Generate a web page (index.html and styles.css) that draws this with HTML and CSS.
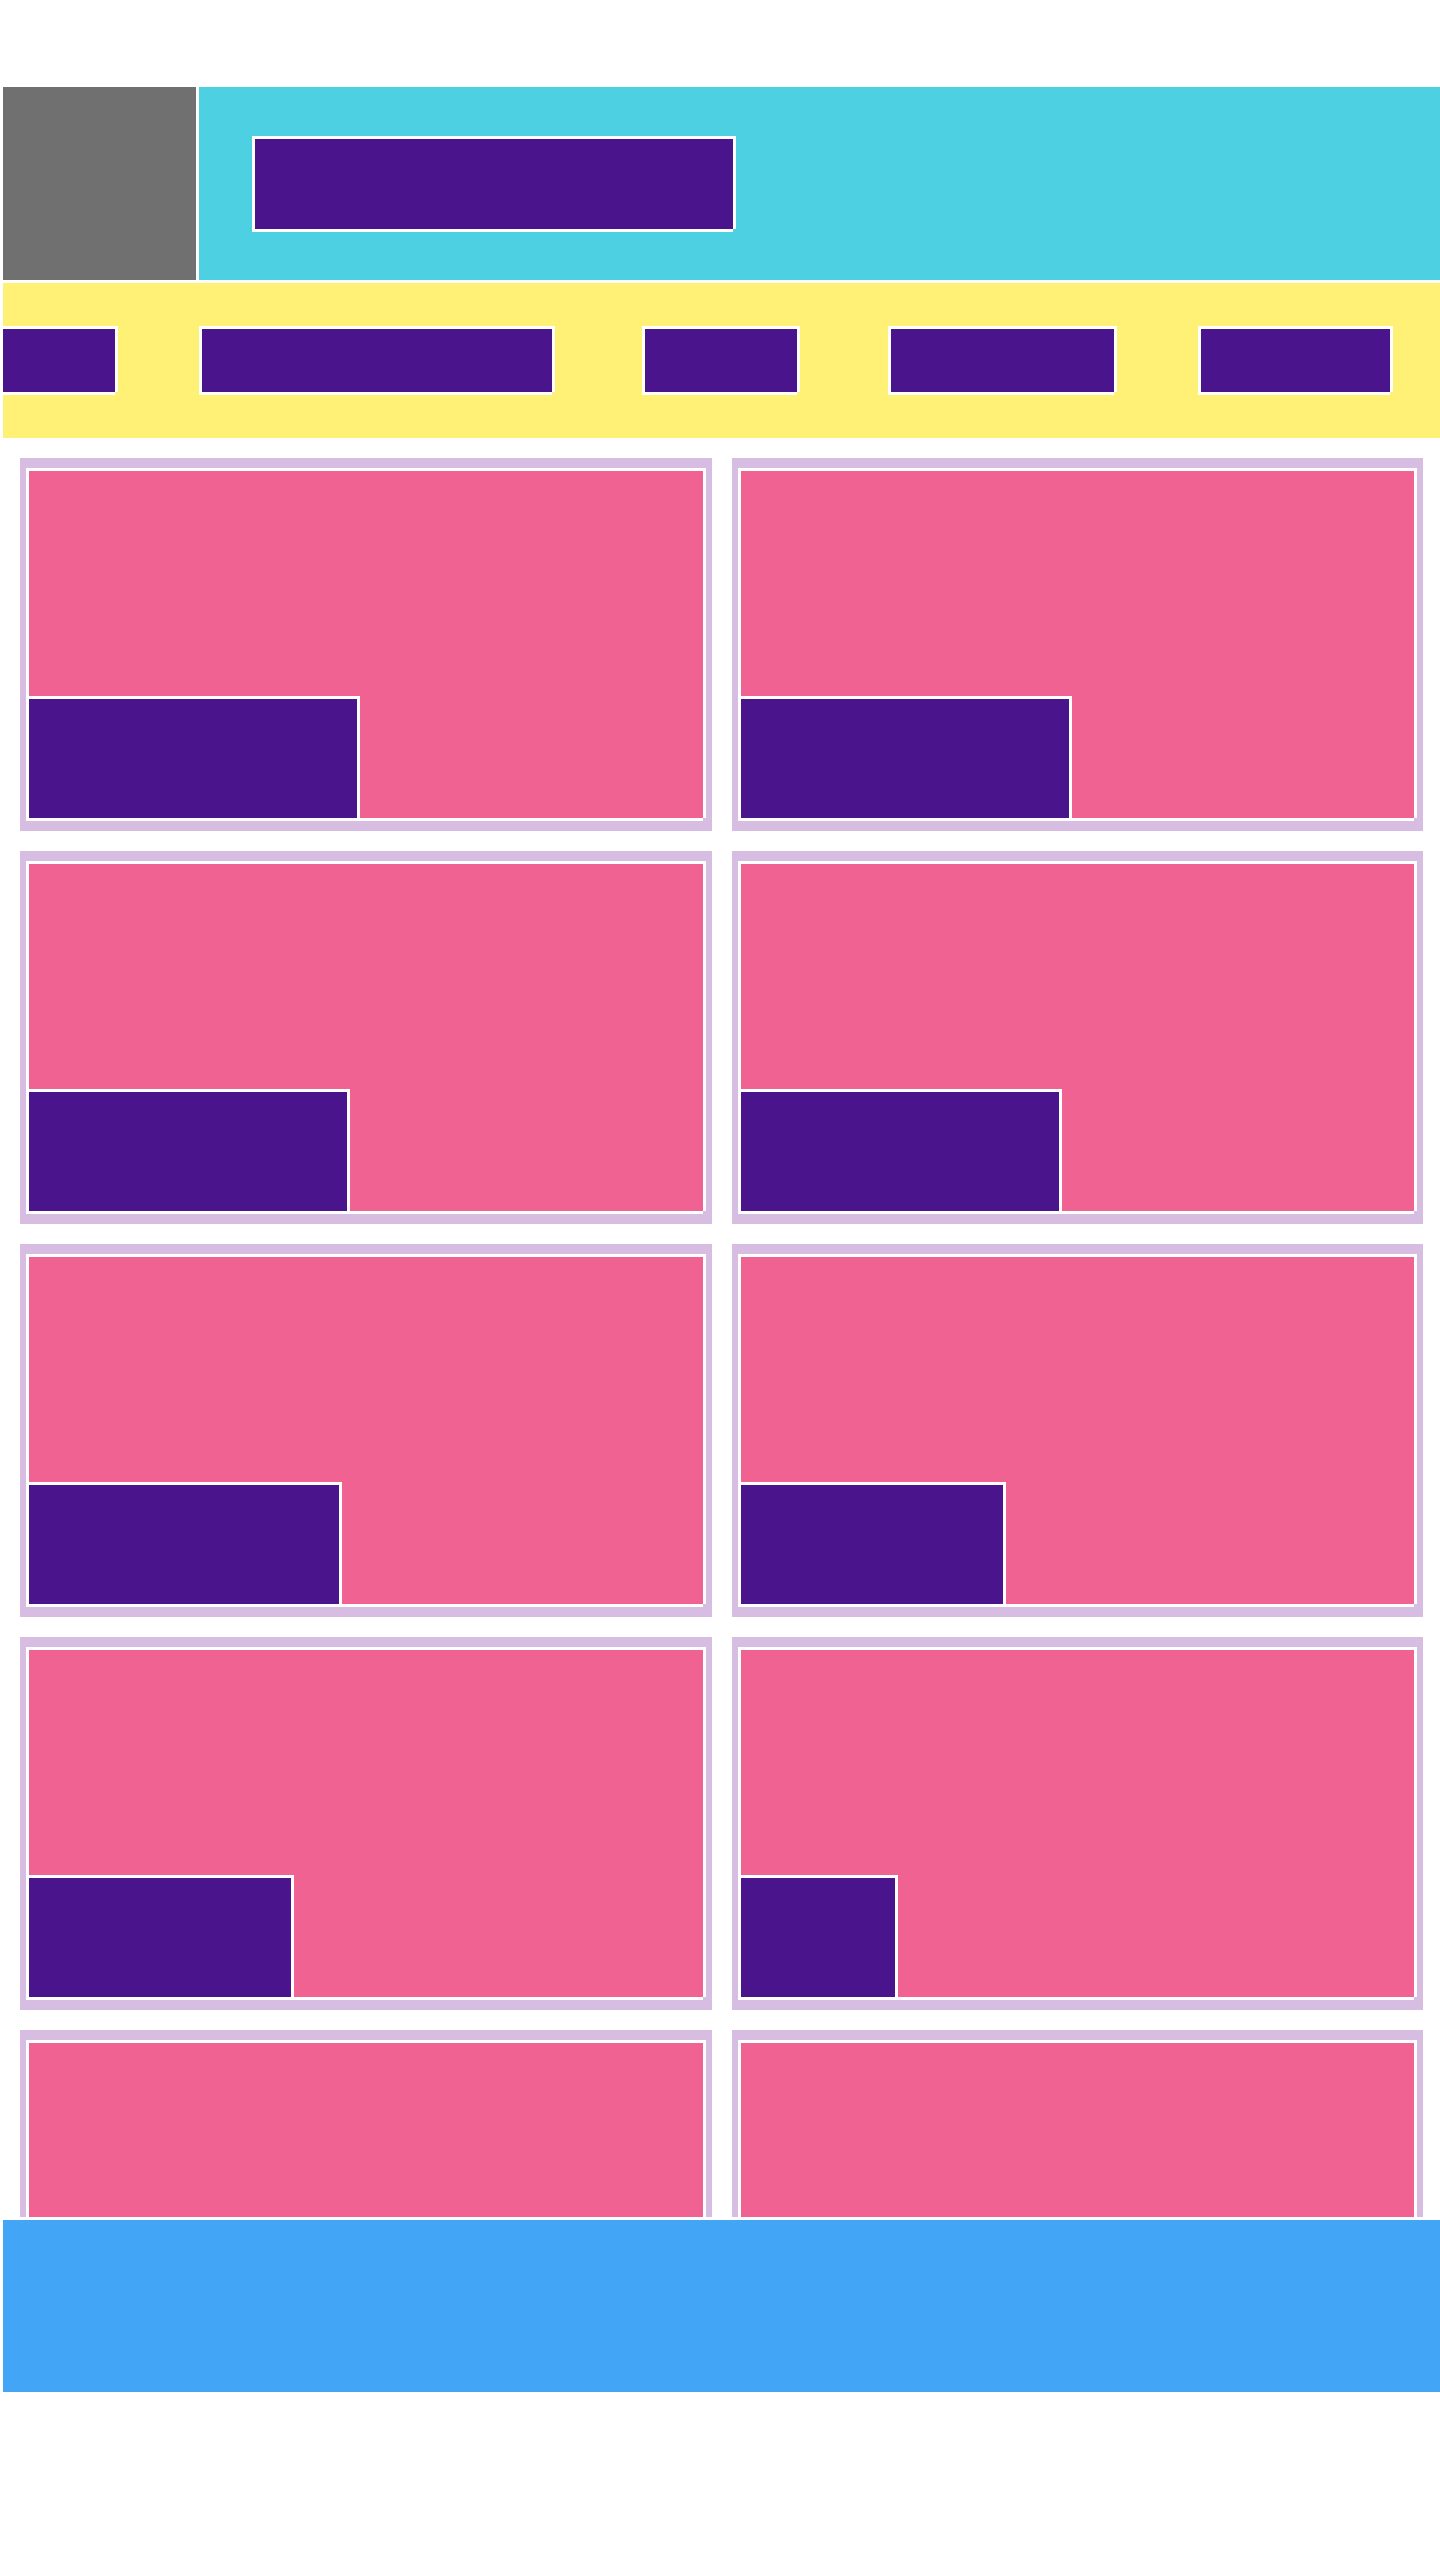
FILE: index.html
```html
<!DOCTYPE html>
<html lang="en">
<head>
    <meta charset="UTF-8">
    <meta name="viewport" content="width=device-width, initial-scale=1.0">
    <title>Gallery</title>
    <link rel="stylesheet" href="styles.css">
</head>
<body>
    <div class="page">
        <header class="header">
            <div class="logo"></div>
            <div class="banner">
                <div class="title block"></div>
            </div>
        </header>

        <nav class="nav">
            <a class="nav-link block link-1"></a>
            <a class="nav-link block link-2"></a>
            <a class="nav-link block link-3"></a>
            <a class="nav-link block link-4"></a>
            <a class="nav-link block link-5"></a>
        </nav>

        <main class="main">
            <div class="grid">
                <div class="card"><div class="thumb block"><div class="caption block w-328"></div></div></div>
                <div class="card"><div class="thumb block"><div class="caption block w-328"></div></div></div>
                <div class="card"><div class="thumb block"><div class="caption block w-318"></div></div></div>
                <div class="card"><div class="thumb block"><div class="caption block w-318"></div></div></div>
                <div class="card"><div class="thumb block"><div class="caption block w-310"></div></div></div>
                <div class="card"><div class="thumb block"><div class="caption block w-262"></div></div></div>
                <div class="card"><div class="thumb block"><div class="caption block w-262"></div></div></div>
                <div class="card"><div class="thumb block"><div class="caption block w-154"></div></div></div>
                <div class="card"><div class="thumb block"><div class="caption block w-262"></div></div></div>
                <div class="card"><div class="thumb block"><div class="caption block w-262"></div></div></div>
            </div>
        </main>

        <footer class="footer"></footer>
    </div>
</body>
</html>
```

FILE: styles.css
```css
* {
    box-sizing: border-box;
}
body {
    margin: 0;
    background-color: #fff;
    font-family: "Liberation Sans", Arial, sans-serif;
}
.page {
    display: flex;
    flex-direction: column;
    gap: 3px;
    padding: 87px 0 0 3px;
}
/* white 3px frame, bottom-right corner left open */
.block {
    box-shadow: 0 -3px #fff, -3px 0 #fff, 3px 0 #fff, 0 3px #fff,
                -3px -3px #fff, 3px -3px #fff, -3px 3px #fff;
}
.header {
    display: flex;
    gap: 3px;
    height: 193px;
}
.logo {
    width: 193px;
    background-color: #707070;
}
.banner {
    flex: 1;
    display: flex;
    align-items: center;
    padding-left: 56px;
    background-color: #4dd0e1;
}
.title {
    width: 478px;
    height: 90px;
    background-color: #4a148c;
}
.nav {
    display: flex;
    align-items: center;
    height: 155px;
    background-color: #fff176;
}
.nav-link {
    display: block;
    height: 63px;
    background-color: #4a148c;
}
.link-1 { width: 112px; }
.link-2 { width: 350px; margin-left: 87px; }
.link-3 { width: 152px; margin-left: 93px; }
.link-4 { width: 223px; margin-left: 94px; }
.link-5 { width: 189px; margin-left: 87px; }
.main {
    height: 1776px;
    overflow: hidden;
    padding: 17px;
}
.grid {
    display: grid;
    grid-template-columns: 1fr 1fr;
    grid-auto-rows: 373px;
    gap: 20px;
}
.card {
    padding: 13px 9px;
    background-color: #d7bde2;
}
.thumb {
    display: flex;
    flex-direction: column;
    justify-content: flex-end;
    height: 347px;
    background-color: #f06292;
}
.caption {
    height: 119px;
    background-color: #4a148c;
}
.w-328 { width: 328px; }
.w-318 { width: 318px; }
.w-310 { width: 310px; }
.w-262 { width: 262px; }
.w-154 { width: 154px; }
.footer {
    height: 172px;
    background-color: #42a5f5;
}
```
